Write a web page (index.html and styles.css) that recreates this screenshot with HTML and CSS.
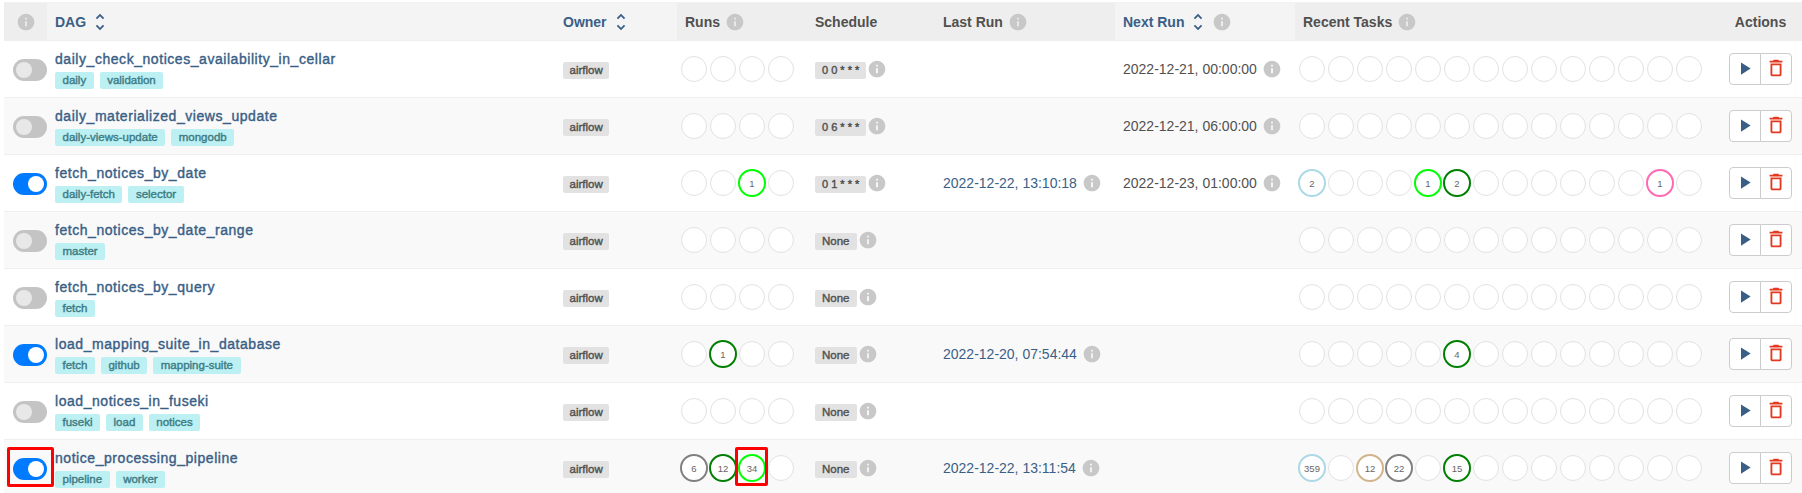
FILE: index.html
```html
<!DOCTYPE html>
<html lang="en">
<head>
    <meta charset="UTF-8">
    <title>DAGs - Airflow</title>
    <link rel="stylesheet" href="styles.css">
</head>
<body>
    <svg class="sprite" aria-hidden="true">
        <symbol id="i-info" viewBox="0 0 24 24"><path d="M12 2C6.48 2 2 6.48 2 12s4.48 10 10 10 10-4.48 10-10S17.52 2 12 2zm1 15h-2v-6h2v6zm0-8h-2V7h2v2z"/></symbol>
        <symbol id="i-sort" viewBox="0 0 24 24"><path d="M12 5.83L15.17 9l1.41-1.41L12 3 7.41 7.59 8.83 9 12 5.83zm0 12.34L8.83 15l-1.41 1.41L12 21l4.59-4.59L15.17 15 12 18.17z"/></symbol>
        <symbol id="i-play" viewBox="0 0 24 24"><path d="M8 5v14l11-7z"/></symbol>
        <symbol id="i-delete" viewBox="0 0 24 24"><path d="M6 19c0 1.1.9 2 2 2h8c1.1 0 2-.9 2-2V7H6v12zM8 9h8v10H8V9zm7.5-5l-1-1h-5l-1 1H5v2h14V4z"/></symbol>
    </svg>

    <div class="page">
        <table class="dags">
            <colgroup>
                <col class="col-toggle">
                <col class="col-dag">
                <col class="col-owner">
                <col class="col-runs">
                <col class="col-schedule">
                <col class="col-last">
                <col class="col-next">
                <col class="col-tasks">
                <col>
            </colgroup>
            <thead>
                <tr>
                    <th><svg class="info info-head"><use href="#i-info"/></svg></th>
                    <th class="sortable"><span class="head">DAG <svg class="sort"><use href="#i-sort"/></svg></span></th>
                    <th class="sortable"><span class="head">Owner <svg class="sort"><use href="#i-sort"/></svg></span></th>
                    <th><span class="head">Runs <svg class="info"><use href="#i-info"/></svg></span></th>
                    <th>Schedule</th>
                    <th><span class="head">Last Run <svg class="info"><use href="#i-info"/></svg></span></th>
                    <th class="sortable"><span class="head">Next Run <svg class="sort"><use href="#i-sort"/></svg> <svg class="info"><use href="#i-info"/></svg></span></th>
                    <th><span class="head">Recent Tasks <svg class="info"><use href="#i-info"/></svg></span></th>
                    <th class="center">Actions</th>
                </tr>
            </thead>
            <tbody>
                <tr>
                    <td class="cell-toggle"><span class="switch"></span></td>
                    <td>
                        <a class="dag-name">daily_check_notices_availability_in_cellar</a>
                        <div class="tags"><span class="tag">daily</span><span class="tag">validation</span></div>
                    </td>
                    <td><span class="badge">airflow</span></td>
                    <td class="cell-dots"><div class="dots"><span class="dot"></span><span class="dot"></span><span class="dot"></span><span class="dot"></span></div></td>
                    <td><span class="inline"><span class="badge cron">0 0 * * *</span><svg class="info"><use href="#i-info"/></svg></span></td>
                    <td></td>
                    <td><span class="inline date">2022-12-21, 00:00:00 <svg class="info"><use href="#i-info"/></svg></span></td>
                    <td class="cell-dots"><div class="dots"><span class="dot"></span><span class="dot"></span><span class="dot"></span><span class="dot"></span><span class="dot"></span><span class="dot"></span><span class="dot"></span><span class="dot"></span><span class="dot"></span><span class="dot"></span><span class="dot"></span><span class="dot"></span><span class="dot"></span><span class="dot"></span></div></td>
                    <td class="center"><div class="actions"><button type="button" class="btn"><svg class="play"><use href="#i-play"/></svg></button><button type="button" class="btn"><svg class="trash"><use href="#i-delete"/></svg></button></div></td>
                </tr>
                <tr>
                    <td class="cell-toggle"><span class="switch"></span></td>
                    <td>
                        <a class="dag-name">daily_materialized_views_update</a>
                        <div class="tags"><span class="tag">daily-views-update</span><span class="tag">mongodb</span></div>
                    </td>
                    <td><span class="badge">airflow</span></td>
                    <td class="cell-dots"><div class="dots"><span class="dot"></span><span class="dot"></span><span class="dot"></span><span class="dot"></span></div></td>
                    <td><span class="inline"><span class="badge cron">0 6 * * *</span><svg class="info"><use href="#i-info"/></svg></span></td>
                    <td></td>
                    <td><span class="inline date">2022-12-21, 06:00:00 <svg class="info"><use href="#i-info"/></svg></span></td>
                    <td class="cell-dots"><div class="dots"><span class="dot"></span><span class="dot"></span><span class="dot"></span><span class="dot"></span><span class="dot"></span><span class="dot"></span><span class="dot"></span><span class="dot"></span><span class="dot"></span><span class="dot"></span><span class="dot"></span><span class="dot"></span><span class="dot"></span><span class="dot"></span></div></td>
                    <td class="center"><div class="actions"><button type="button" class="btn"><svg class="play"><use href="#i-play"/></svg></button><button type="button" class="btn"><svg class="trash"><use href="#i-delete"/></svg></button></div></td>
                </tr>
                <tr>
                    <td class="cell-toggle"><span class="switch on"></span></td>
                    <td>
                        <a class="dag-name">fetch_notices_by_date</a>
                        <div class="tags"><span class="tag">daily-fetch</span><span class="tag">selector</span></div>
                    </td>
                    <td><span class="badge">airflow</span></td>
                    <td class="cell-dots"><div class="dots"><span class="dot"></span><span class="dot"></span><span class="dot running">1</span><span class="dot"></span></div></td>
                    <td><span class="inline"><span class="badge cron">0 1 * * *</span><svg class="info"><use href="#i-info"/></svg></span></td>
                    <td><span class="inline date link">2022-12-22, 13:10:18 <svg class="info"><use href="#i-info"/></svg></span></td>
                    <td><span class="inline date">2022-12-23, 01:00:00 <svg class="info"><use href="#i-info"/></svg></span></td>
                    <td class="cell-dots"><div class="dots"><span class="dot queued">2</span><span class="dot"></span><span class="dot"></span><span class="dot"></span><span class="dot running">1</span><span class="dot success">2</span><span class="dot"></span><span class="dot"></span><span class="dot"></span><span class="dot"></span><span class="dot"></span><span class="dot"></span><span class="dot retry">1</span><span class="dot"></span></div></td>
                    <td class="center"><div class="actions"><button type="button" class="btn"><svg class="play"><use href="#i-play"/></svg></button><button type="button" class="btn"><svg class="trash"><use href="#i-delete"/></svg></button></div></td>
                </tr>
                <tr>
                    <td class="cell-toggle"><span class="switch"></span></td>
                    <td>
                        <a class="dag-name">fetch_notices_by_date_range</a>
                        <div class="tags"><span class="tag">master</span></div>
                    </td>
                    <td><span class="badge">airflow</span></td>
                    <td class="cell-dots"><div class="dots"><span class="dot"></span><span class="dot"></span><span class="dot"></span><span class="dot"></span></div></td>
                    <td><span class="inline"><span class="badge none">None</span><svg class="info"><use href="#i-info"/></svg></span></td>
                    <td></td>
                    <td></td>
                    <td class="cell-dots"><div class="dots"><span class="dot"></span><span class="dot"></span><span class="dot"></span><span class="dot"></span><span class="dot"></span><span class="dot"></span><span class="dot"></span><span class="dot"></span><span class="dot"></span><span class="dot"></span><span class="dot"></span><span class="dot"></span><span class="dot"></span><span class="dot"></span></div></td>
                    <td class="center"><div class="actions"><button type="button" class="btn"><svg class="play"><use href="#i-play"/></svg></button><button type="button" class="btn"><svg class="trash"><use href="#i-delete"/></svg></button></div></td>
                </tr>
                <tr>
                    <td class="cell-toggle"><span class="switch"></span></td>
                    <td>
                        <a class="dag-name">fetch_notices_by_query</a>
                        <div class="tags"><span class="tag">fetch</span></div>
                    </td>
                    <td><span class="badge">airflow</span></td>
                    <td class="cell-dots"><div class="dots"><span class="dot"></span><span class="dot"></span><span class="dot"></span><span class="dot"></span></div></td>
                    <td><span class="inline"><span class="badge none">None</span><svg class="info"><use href="#i-info"/></svg></span></td>
                    <td></td>
                    <td></td>
                    <td class="cell-dots"><div class="dots"><span class="dot"></span><span class="dot"></span><span class="dot"></span><span class="dot"></span><span class="dot"></span><span class="dot"></span><span class="dot"></span><span class="dot"></span><span class="dot"></span><span class="dot"></span><span class="dot"></span><span class="dot"></span><span class="dot"></span><span class="dot"></span></div></td>
                    <td class="center"><div class="actions"><button type="button" class="btn"><svg class="play"><use href="#i-play"/></svg></button><button type="button" class="btn"><svg class="trash"><use href="#i-delete"/></svg></button></div></td>
                </tr>
                <tr>
                    <td class="cell-toggle"><span class="switch on"></span></td>
                    <td>
                        <a class="dag-name">load_mapping_suite_in_database</a>
                        <div class="tags"><span class="tag">fetch</span><span class="tag">github</span><span class="tag">mapping-suite</span></div>
                    </td>
                    <td><span class="badge">airflow</span></td>
                    <td class="cell-dots"><div class="dots"><span class="dot"></span><span class="dot success">1</span><span class="dot"></span><span class="dot"></span></div></td>
                    <td><span class="inline"><span class="badge none">None</span><svg class="info"><use href="#i-info"/></svg></span></td>
                    <td><span class="inline date link">2022-12-20, 07:54:44 <svg class="info"><use href="#i-info"/></svg></span></td>
                    <td></td>
                    <td class="cell-dots"><div class="dots"><span class="dot"></span><span class="dot"></span><span class="dot"></span><span class="dot"></span><span class="dot"></span><span class="dot success">4</span><span class="dot"></span><span class="dot"></span><span class="dot"></span><span class="dot"></span><span class="dot"></span><span class="dot"></span><span class="dot"></span><span class="dot"></span></div></td>
                    <td class="center"><div class="actions"><button type="button" class="btn"><svg class="play"><use href="#i-play"/></svg></button><button type="button" class="btn"><svg class="trash"><use href="#i-delete"/></svg></button></div></td>
                </tr>
                <tr>
                    <td class="cell-toggle"><span class="switch"></span></td>
                    <td>
                        <a class="dag-name">load_notices_in_fuseki</a>
                        <div class="tags"><span class="tag">fuseki</span><span class="tag">load</span><span class="tag">notices</span></div>
                    </td>
                    <td><span class="badge">airflow</span></td>
                    <td class="cell-dots"><div class="dots"><span class="dot"></span><span class="dot"></span><span class="dot"></span><span class="dot"></span></div></td>
                    <td><span class="inline"><span class="badge none">None</span><svg class="info"><use href="#i-info"/></svg></span></td>
                    <td></td>
                    <td></td>
                    <td class="cell-dots"><div class="dots"><span class="dot"></span><span class="dot"></span><span class="dot"></span><span class="dot"></span><span class="dot"></span><span class="dot"></span><span class="dot"></span><span class="dot"></span><span class="dot"></span><span class="dot"></span><span class="dot"></span><span class="dot"></span><span class="dot"></span><span class="dot"></span></div></td>
                    <td class="center"><div class="actions"><button type="button" class="btn"><svg class="play"><use href="#i-play"/></svg></button><button type="button" class="btn"><svg class="trash"><use href="#i-delete"/></svg></button></div></td>
                </tr>
                <tr>
                    <td class="cell-toggle"><span class="switch on marked"></span></td>
                    <td>
                        <a class="dag-name">notice_processing_pipeline</a>
                        <div class="tags"><span class="tag">pipeline</span><span class="tag">worker</span></div>
                    </td>
                    <td><span class="badge">airflow</span></td>
                    <td class="cell-dots"><div class="dots"><span class="dot failed">6</span><span class="dot success">12</span><span class="dot running marked">34</span><span class="dot"></span></div></td>
                    <td><span class="inline"><span class="badge none">None</span><svg class="info"><use href="#i-info"/></svg></span></td>
                    <td><span class="inline date link">2022-12-22, 13:11:54 <svg class="info"><use href="#i-info"/></svg></span></td>
                    <td></td>
                    <td class="cell-dots"><div class="dots"><span class="dot queued">359</span><span class="dot"></span><span class="dot upstream">12</span><span class="dot failed">22</span><span class="dot"></span><span class="dot success">15</span><span class="dot"></span><span class="dot"></span><span class="dot"></span><span class="dot"></span><span class="dot"></span><span class="dot"></span><span class="dot"></span><span class="dot"></span></div></td>
                    <td class="center"><div class="actions"><button type="button" class="btn"><svg class="play"><use href="#i-play"/></svg></button><button type="button" class="btn"><svg class="trash"><use href="#i-delete"/></svg></button></div></td>
                </tr>
            </tbody>
        </table>
    </div>
</body>
</html>
```

FILE: styles.css
```css
:root {
    --text-color: #51504f;
    --link-color: #3a5f86;
    --border-color: #eeeeee;
    --head-dark: #eeeeee;
    --head-light: #f4f4f4;
    --icon-grey: #c8c8c8;
}
html, body {
    margin: 0;
    padding: 0;
    background-color: #ffffff;
}
body {
    font-family: "Liberation Sans", Arial, sans-serif;
    font-size: 14px;
    color: var(--text-color);
}
.sprite {
    display: none;
}
.page {
    height: 493px;
    overflow: hidden;
    padding: 2px 0 0 4px;
    box-sizing: border-box;
}
.dags {
    width: 1798px;
    table-layout: fixed;
    border-collapse: collapse;
}
.col-toggle { width: 43px; }
.col-dag { width: 508px; }
.col-owner { width: 122px; }
.col-runs { width: 130px; }
.col-schedule { width: 128px; }
.col-last { width: 180px; }
.col-next { width: 180px; }
.col-tasks { width: 424px; }

th {
    height: 38px;
    padding: 0 8px;
    box-sizing: border-box;
    background-color: var(--head-dark);
    border-top: 1px solid #f2f2f2;
    border-bottom: 1px solid var(--border-color);
    text-align: left;
    font-weight: 700;
    white-space: nowrap;
}
th.sortable {
    background-color: var(--head-light);
    color: var(--link-color);
}
th.center, td.center {
    text-align: center;
}
td {
    height: 57px;
    padding: 0 8px;
    box-sizing: border-box;
    border-bottom: 1px solid var(--border-color);
    vertical-align: middle;
    white-space: nowrap;
}
tbody tr:nth-child(even) td {
    background-color: #f9f9f9;
}
.head {
    display: inline-flex;
    align-items: center;
    gap: 5px;
}
.inline {
    display: inline-flex;
    align-items: center;
    gap: 1px;
}
.date {
    gap: 5px;
}
.date.link {
    color: var(--link-color);
}
.info {
    width: 20px;
    height: 20px;
    fill: var(--icon-grey);
    flex: none;
}
.info-head {
    display: block;
    margin-left: 4px;
}
.sort {
    width: 22px;
    height: 22px;
    margin-left: -2px;
    fill: var(--link-color);
    flex: none;
}
.sort + .info {
    margin-left: -2px;
}
.cell-toggle {
    padding: 0 0 0 9px;
}
.switch {
    display: block;
    position: relative;
    width: 34px;
    height: 22px;
    margin-top: 2px;
    border-radius: 11px;
    background-color: #c4c4c4;
}
.switch::before {
    content: "";
    position: absolute;
    top: 3px;
    left: 3px;
    width: 16px;
    height: 16px;
    border-radius: 50%;
    background-color: #e8e8e8;
}
.switch.on {
    background-color: #007bff;
}
.switch.on::before {
    left: 15px;
    background-color: #ffffff;
}
.dag-name {
    display: block;
    margin-top: 1px;
    color: var(--link-color);
    line-height: 17px;
    letter-spacing: 0.55px;
    -webkit-text-stroke: 0.4px var(--link-color);
}
.tags {
    display: flex;
    gap: 6px;
    margin-top: 4px;
}
.tag {
    height: 17px;
    line-height: 17px;
    padding: 0 7.5px;
    border-radius: 2px;
    background-color: #bcf0f3;
    color: #3d7c85;
    font-size: 11.5px;
    -webkit-text-stroke: 0.4px #3d7c85;
}
.badge {
    display: inline-block;
    position: relative;
    top: 1px;
    height: 17px;
    line-height: 17px;
    padding: 0 6.5px;
    border-radius: 2px;
    background-color: #e2e2e2;
    font-size: 11.5px;
    -webkit-text-stroke: 0.4px var(--text-color);
}
.badge.none {
    padding: 0 7px;
}
.badge.cron {
    padding: 0 7px;
    font-size: 11px;
}
.cell-dots {
    padding: 0 0 0 4px;
}
.dots {
    display: flex;
    gap: 3px;
}
.dot {
    display: flex;
    align-items: center;
    justify-content: center;
    position: relative;
    width: 26px;
    height: 26px;
    box-sizing: border-box;
    border: 1px solid #e2e2e2;
    border-radius: 50%;
    font-size: 9.5px;
    color: #666666;
    background-color: #ffffff;
}
.dot.success,
.dot.running,
.dot.failed,
.dot.queued,
.dot.upstream,
.dot.retry {
    width: 28px;
    height: 28px;
    margin: -1px;
    border-width: 2px;
}
.dot.success { border-color: #008000; }
.dot.running { border-color: #00ff00; }
.dot.failed { border-color: #808080; }
.dot.queued { border-color: #add8e6; }
.dot.upstream { border-color: #d2b48c; }
.dot.retry { border-color: #ff69b4; }

/* red highlight boxes drawn over the screenshot */
.marked::after {
    content: "";
    position: absolute;
    border: 3px solid #ff0000;
    border-radius: 2px;
}
.switch.marked::after {
    top: -11px;
    right: -7px;
    bottom: -7px;
    left: -6px;
}
.dot.marked::after {
    top: -9px;
    right: -4px;
    bottom: -6px;
    left: -5px;
}
.actions {
    display: flex;
    justify-content: center;
}
.btn {
    display: flex;
    align-items: center;
    justify-content: center;
    width: 32px;
    height: 32px;
    padding: 0;
    box-sizing: border-box;
    border: 1px solid #cccccc;
    background-color: #ffffff;
    cursor: pointer;
}
.btn:first-child {
    border-radius: 4px 0 0 4px;
}
.btn:last-child {
    margin-left: -1px;
    border-radius: 0 4px 4px 0;
}
.play {
    width: 21px;
    height: 21px;
    margin: -2px 0 0 -2px;
    fill: var(--link-color);
}
.trash {
    width: 22px;
    height: 22px;
    margin-top: -2px;
    fill: #e43921;
}
```
